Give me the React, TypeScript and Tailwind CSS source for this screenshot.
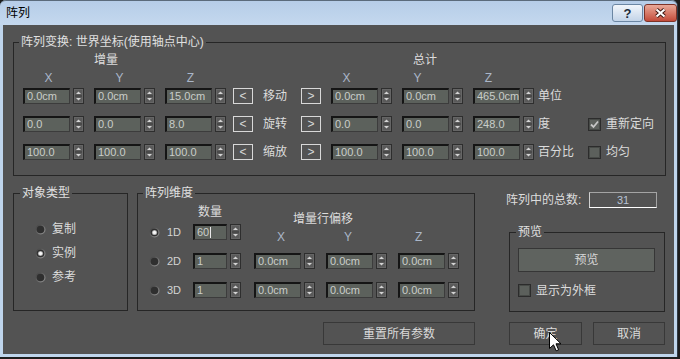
import React from 'react';

function Spin() {
  return (
    <svg width="11" height="16" viewBox="0 0 11 16" className="shrink-0">
      <rect x="0.5" y="0.5" width="10" height="15" fill="#5a5a5a" stroke="#2e2e2e" />
      <rect x="1.5" y="1.5" width="8" height="13" fill="none" stroke="#666" />
      <line x1="2" y1="8" x2="9" y2="8" stroke="#3a3a3a" />
      <path d="M3 6 L5.5 3.5 L8 6 Z" fill="#d4d4d4" />
      <path d="M3 10 L5.5 12.5 L8 10 Z" fill="#d4d4d4" />
    </svg>
  );
}

function Field({ value, narrow, cursor }: { value: string; narrow?: boolean; cursor?: boolean }) {
  return (
    <div
      className={`${narrow ? 'w-[34px]' : 'w-[47px]'} h-[16px] flex items-center bg-[#5c615c] border-t-2 border-l-2 border-r border-b border-t-[#151515] border-l-[#151515] border-r-[#3c3c3c] border-b-[#3c3c3c] pl-[2px] text-[11px] leading-[13px] text-[#c9cdc9] overflow-hidden whitespace-nowrap`}
    >
      {value}
      {cursor && <span className="ml-[1px] w-[1px] h-[11px] bg-[#e8e8e8]" />}
    </div>
  );
}

function FieldSpin({ value, narrow, cursor }: { value: string; narrow?: boolean; cursor?: boolean }) {
  return (
    <div className="flex items-center gap-[3px]">
      <Field value={value} narrow={narrow} cursor={cursor} />
      <Spin />
    </div>
  );
}

function ArrowBtn({ children, className = '' }: { children: React.ReactNode; className?: string }) {
  return (
    <div
      className={`w-[20px] h-[16px] flex items-center justify-center border border-[#d8d8d8] text-[12px] leading-[12px] text-[#d8d8d8] ${className}`}
    >
      {children}
    </div>
  );
}

function Check({ on }: { on?: boolean }) {
  return (
    <svg width="13" height="13" viewBox="0 0 13 13" className="shrink-0">
      <rect x="0.5" y="0.5" width="12" height="12" fill="#5c605c" stroke="#2c2c2c" />
      <rect x="1.5" y="1.5" width="10" height="10" fill="none" stroke="#474a47" />
      {on && <path d="M3 6.5 L5.5 9 L10 3.5" stroke="#c6c6c6" strokeWidth="1.8" fill="none" />}
    </svg>
  );
}

function Radio({ on }: { on?: boolean }) {
  return (
    <svg width="11" height="11" viewBox="0 0 11 11" className="shrink-0">
      <defs>
        <linearGradient id="rring" x1="0" y1="0" x2="1" y2="1">
          <stop offset="0" stopColor="#3a3a3a" />
          <stop offset="1" stopColor="#9a9a9a" />
        </linearGradient>
      </defs>
      <circle cx="5.5" cy="5.5" r="5" fill="url(#rring)" />
      <circle cx="5.5" cy="5.5" r="3.8" fill="#2f2f2f" />
      {on && <circle cx="5.5" cy="5.5" r="2.6" fill="#a8a8a8" />}
      {on && <circle cx="5.5" cy="5.5" r="1.7" fill="#f6f6f6" />}
    </svg>
  );
}

function Group({
  title,
  legendLeft,
  className,
  children,
}: {
  title: string;
  legendLeft: string;
  className: string;
  children: React.ReactNode;
}) {
  return (
    <div className={`relative border border-[#262626] ${className}`}>
      <span className={`absolute -top-[9px] ${legendLeft} px-[2px] bg-[#535353] text-[12px] leading-[16px] text-[#e0e0e0] whitespace-nowrap`}>
        {title}
      </span>
      {children}
    </div>
  );
}

function TransformRow({
  left,
  label,
  right,
  unit,
  check,
}: {
  left: string[];
  label: string;
  right: string[];
  unit: string;
  check?: { text: string; on?: boolean };
}) {
  return (
    <div className="flex items-center h-[16px]">
      <div className="flex gap-[10px]">
        {left.map((v, i) => (
          <FieldSpin key={i} value={v} />
        ))}
      </div>
      <ArrowBtn className="ml-[7px]">&lt;</ArrowBtn>
      <span className="w-[48px] pl-[10px]">{label}</span>
      <ArrowBtn>&gt;</ArrowBtn>
      <div className="ml-[10px] flex gap-[10px]">
        {right.map((v, i) => (
          <FieldSpin key={i} value={v} />
        ))}
      </div>
      <span className="ml-[4px] w-[50px]">{unit}</span>
      {check && (
        <div className="flex items-center gap-[5px]">
          <Check on={check.on} />
          <span>{check.text}</span>
        </div>
      )}
    </div>
  );
}

function Btn({ children, className }: { children: React.ReactNode; className: string }) {
  return (
    <div className={`h-[23px] flex items-center justify-center border border-[#383838] text-[#dadada] ${className}`}>
      {children}
    </div>
  );
}

export default function App() {
  return (
    <div className="relative w-[680px] h-[359px] bg-[#1d1d1d] overflow-hidden font-['Liberation_Sans','Noto_Sans_CJK_SC',sans-serif]">
      <div className="flex flex-col w-[678px] h-[357px] rounded-t-[6px] border-r border-[#2e3a46] bg-[#bfd5ec]">
        {/* title bar */}
        <div className="flex justify-between h-[25px] shrink-0 rounded-t-[6px] border-t border-[#5b6b7c] bg-linear-to-b from-[#b6cde8] to-[#c4d8ee]">
          <span className="pl-[6px] pt-[4px] text-[12px] leading-[16px] text-black">阵列</span>
          <div className="flex gap-[1px] pt-[3px]">
            <div className="w-[31px] h-[18px] rounded-[3px] border border-[#6b86a3] bg-linear-to-b from-[#f2f6fb] to-[#c3d4e8] flex items-center justify-center text-[13px] font-bold leading-[13px] text-[#1e2c3c]">
              ?
            </div>
            <div className="w-[33px] h-[18px] rounded-[3px] border border-[#7d3328] bg-linear-to-b from-[#e9a898] to-[#c24a3a] flex items-center justify-center">
              <svg width="13" height="10" viewBox="0 0 13 10">
                <path d="M2.5 1.5 L10.5 8.5 M10.5 1.5 L2.5 8.5" stroke="#3a140f" strokeWidth="4" />
                <path d="M2.5 1.5 L10.5 8.5 M10.5 1.5 L2.5 8.5" stroke="#ffffff" strokeWidth="2.2" />
              </svg>
            </div>
          </div>
        </div>

        {/* client area */}
        <div className="pl-[3px] pr-[3px] pb-[3px]">
          <div className="h-[329px] bg-[#535353] pl-[10px] pt-[17px] text-[12px] leading-[16px] text-[#dcdcdc]">
            <Group
              title="阵列变换: 世界坐标(使用轴点中心)"
              legendLeft="left-[5px]"
              className="w-[653px] h-[134px] pt-[9px] pl-[9px]"
            >
              <div className="flex h-[16px]">
                <span className="ml-[71px]">增量</span>
                <span className="ml-[295px]">总计</span>
              </div>
              <div className="mt-[2px] flex h-[16px] text-[#aab6c8]">
                <div className="flex gap-[20px]">
                  {['X', 'Y', 'Z'].map((a) => (
                    <span key={a} className="w-[51px] text-center">{a}</span>
                  ))}
                </div>
                <div className="ml-[105px] flex gap-[20px]">
                  {['X', 'Y', 'Z'].map((a) => (
                    <span key={a} className="w-[51px] text-center">{a}</span>
                  ))}
                </div>
              </div>
              <div className="mt-[2px] flex flex-col gap-[12px]">
                <TransformRow
                  left={['0.0cm', '0.0cm', '15.0cm']}
                  label="移动"
                  right={['0.0cm', '0.0cm', '465.0cm']}
                  unit="单位"
                />
                <TransformRow
                  left={['0.0', '0.0', '8.0']}
                  label="旋转"
                  right={['0.0', '0.0', '248.0']}
                  unit="度"
                  check={{ text: '重新定向', on: true }}
                />
                <TransformRow
                  left={['100.0', '100.0', '100.0']}
                  label="缩放"
                  right={['100.0', '100.0', '100.0']}
                  unit="百分比"
                  check={{ text: '均匀' }}
                />
              </div>
            </Group>

            <div className="flex items-start">
              {/* left column */}
              <div className="mt-[17px] w-[462px]">
                <div className="flex gap-[9px]">
                  <Group title="对象类型" legendLeft="left-[6px]" className="w-[115px] h-[118px] pt-[23px] pl-[21px]">
                    {[
                      ['复制', false],
                      ['实例', true],
                      ['参考', false],
                    ].map(([t, on]) => (
                      <div key={t as string} className="h-[24px] flex items-center gap-[6px]">
                        <Radio on={on as boolean} />
                        <span>{t as string}</span>
                      </div>
                    ))}
                  </Group>

                  <Group title="阵列维度" legendLeft="left-[5px]" className="w-[338px] h-[118px] pl-[11px] flex items-start">
                    <div className="pt-[30px] w-[44px] flex flex-col gap-[13px]">
                      {['1D', '2D', '3D'].map((d, i) => (
                        <div key={d} className="h-[16px] flex items-center gap-[7px]">
                          <Radio on={i === 0} />
                          <span className="text-[11px] text-[#d4d4d4]">{d}</span>
                        </div>
                      ))}
                    </div>
                    <div className="pt-[10px] w-[48px]">
                      <div className="w-[34px] h-[16px] text-center">数量</div>
                      <div className="mt-[4px] flex flex-col gap-[13px]">
                        <FieldSpin value="60" narrow cursor />
                        <FieldSpin value="1" narrow />
                        <FieldSpin value="1" narrow />
                      </div>
                    </div>
                    <div className="ml-[13px] pt-[17px]">
                      <div className="h-[16px] pl-[39px]">增量行偏移</div>
                      <div className="mt-[2px] h-[16px] flex gap-[11px] text-[#aab6c8]">
                        <span className="w-[61px] pl-[23px]">X</span>
                        <span className="w-[61px] pl-[18px]">Y</span>
                        <span className="w-[61px] pl-[17px]">Z</span>
                      </div>
                      <div className="mt-[8px] flex flex-col gap-[13px]">
                        {[0, 1].map((r) => (
                          <div key={r} className="flex gap-[11px]">
                            <FieldSpin value="0.0cm" />
                            <FieldSpin value="0.0cm" />
                            <FieldSpin value="0.0cm" />
                          </div>
                        ))}
                      </div>
                    </div>
                  </Group>
                </div>
                <div className="mt-[11px] flex justify-end">
                  <Btn className="w-[152px]">重置所有参数</Btn>
                </div>
              </div>

              {/* right column */}
              <div className="ml-[31px] mt-[16px] w-[159px]">
                <div className="h-[16px] flex items-center">
                  <span className="w-[83px] whitespace-nowrap">阵列中的总数:</span>
                  <div className="w-[68px] h-[16px] flex items-center justify-center border border-[#a4a4a4] border-b-white border-l-[#d0d0d0] text-[11px] text-[#b8c2d4]">
                    31
                  </div>
                </div>
                <Group title="预览" legendLeft="left-[6px]" className="mt-[24px] ml-[3px] w-[156px] h-[80px] pt-[15px] pl-[8px]">
                  <div className="w-[137px] h-[24px] flex items-center justify-center bg-[#5f635f] border border-[#363636] text-[#d6d6d6]">
                    预览
                  </div>
                  <div className="mt-[12px] h-[13px] flex items-center gap-[5px]">
                    <Check />
                    <span>显示为外框</span>
                  </div>
                </Group>
                <div className="mt-[10px] ml-[3px] flex gap-[11px]">
                  <Btn className="w-[73px]">确定</Btn>
                  <Btn className="w-[72px]">取消</Btn>
                </div>
              </div>
            </div>
          </div>
        </div>
      </div>

      {/* mouse pointer */}
      <svg className="absolute left-[549px] top-[332px]" width="13" height="20" viewBox="0 0 13 20">
        <path d="M0.5 0.5 L0.5 16.5 L4.5 12.8 L7.2 18.8 L9.6 17.8 L7 11.8 L12 11.8 Z" fill="#ffffff" stroke="#000000" strokeWidth="1" />
      </svg>
    </div>
  );
}
